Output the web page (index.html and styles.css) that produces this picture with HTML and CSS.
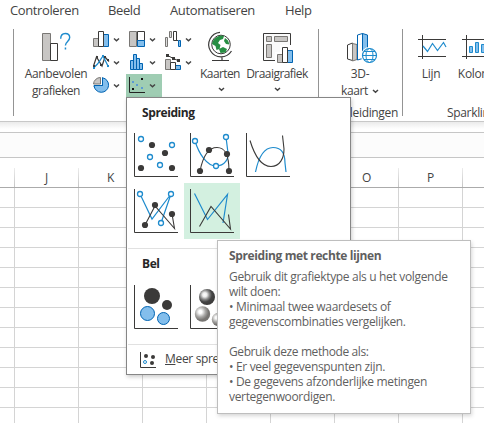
FILE: index.html
```html
<!DOCTYPE html>
<html lang="nl">
<head>
<meta charset="utf-8">
<title>Grafiek invoegen</title>
<link rel="stylesheet" href="styles.css">
</head>
<body>
<div class="app">
  <nav class="tabs">
    <span class="tab t1">Controleren</span><span class="tab t2">Beeld</span><span class="tab t3">Automatiseren</span><span class="tab t4">Help</span>
  </nav>
  <section class="ribbon">
    <div class="group group-start"></div>
    <div class="group group-charts">
      <div class="big recommended">
        <svg width="34" height="34" viewBox="40 30 34 34" fill="none"><path d="M42.5 33.5h8v27h-8z" fill="#c8c6c4" stroke="#797774"/><path d="M50.500 43.500h7v17h-7z" fill="#fff" stroke="#3b3a39"/><path d="M60.700 38.800C60.700 35.400 62.600 33.500 65.300 33.500 68 33.500 69.700 35.100 69.700 37.600 69.700 41.300 65.400 41.600 65.400 45.500" stroke="#1e8bcd" stroke-width="1.400"/><path d="M64.700 47.500h1.500v2h-1.500z" fill="#1e8bcd"/></svg>
        <span class="w-aan">Aanbevolen</span><span class="w-graf">grafieken</span>
      </div>
      <div class="gallery">
        <svg width="36" height="23" viewBox="90 28 36 23" fill="none"><path d="M93.500 38.500h5v8h-5z" fill="#c8c6c4" stroke="#797774"/><path d="M103.500 34.500h5v12h-5z" fill="#83beec" stroke="#0063b1"/><path d="M98.500 31.500h5v15h-5z" fill="#fff" stroke="#3b3a39"/><path class="chev" d="m114 38.500 2.500 2.200 2.500-2.200"/></svg>
        <svg width="36" height="23" viewBox="126 28 36 23" fill="none"><path d="M137.500 31.500h7v9h-7z" fill="#fff" stroke="#3b3a39"/><path d="M129.500 31.500h7v15h-7z" fill="#c8c6c4" stroke="#797774"/><path d="M137.500 40.500h7v6h-7z" fill="#83beec" stroke="#0063b1"/><path class="chev" d="m150 38.500 2.500 2.200 2.500-2.200"/></svg>
        <svg width="36" height="23" viewBox="162 28 36 23" fill="none"><path d="M165.500 37.500h2v9h-2zM169.500 31.500h2v6h-2z" fill="#ddd" stroke="#797774"/><path d="M173.500 31.500h3v9h-3z" fill="#fff" stroke="#3b3a39"/><path d="M178.500 40.500h2v6h-2z" fill="#83beec" stroke="#0063b1"/><path d="M176 40.500h2" stroke="#3b3a39"/><path class="chev" d="m186 38.500 2.500 2.200 2.500-2.200"/></svg>
        <svg width="36" height="23" viewBox="90 51 36 23" fill="none"><path d="m93.500 66 3-9 5.500 9 3-9 4 4.500" stroke="#3b3a39" stroke-width="1.200"/><path d="m93.500 68 4-4 5.500-8 5.500 11" stroke="#1e8bcd" stroke-width="1.300"/><path d="M93 65h2v2h-2zM96 56h2v2h-2zM100 64h2v2h-2zM104 56h2v2h-2zM107 59h2v2h-2z" fill="#3b3a39"/><path d="M93 67h2v2h-2zM102 55h2v2h-2zM107 65h2v2h-2z" fill="#1e8bcd"/><path class="chev" d="m114 61.500 2.500 2.200 2.500-2.200"/></svg>
        <svg width="36" height="23" viewBox="126 51 36 23" fill="none"><path d="M130.500 60.500h3v9h-3zM133.500 54.500h3v15h-3zM136.500 58.500h3v11h-3zM139.500 63.500h3v6h-3z" fill="#83beec" stroke="#0063b1"/><path class="chev" d="m150 61.500 2.500 2.200 2.500-2.200"/></svg>
        <svg width="36" height="23" viewBox="162 51 36 23" fill="none"><path d="M165.500 59.500h5v10h-5z" fill="#c8c6c4" stroke="#797774"/><path d="M175.500 65.500h5v4h-5z" fill="#83beec" stroke="#0063b1"/><path d="M170.500 62.500h5v7h-5z" fill="#fff" stroke="#3b3a39"/><path d="m167.500 55.500 6 3 5.500 2.500" stroke="#3b3a39"/><path d="M166 54h3v3h-3zM172 57h3v3h-3zM177 59h3v3h-3z" fill="#3b3a39"/><path class="chev" d="m186 61.500 2.500 2.200 2.500-2.200"/></svg>
        <svg width="36" height="23" viewBox="90 74 36 23" fill="none"><path d="M102.500 77.800v7.700h-8.500A7.300 7.300 0 1 0 102.500 77.800z" fill="#83beec" stroke="#0063b1"/><path d="M92.500 86V76h9.500v10z" fill="#fff"/><path d="M94 86.500v-1h8.500v-8" stroke="#0063b1"/><path d="M93.500 84h7v-6.500a7 7 0 0 0-7 6.500z" fill="#c8c6c4" stroke="#797774"/><path class="chev" d="m114 84.500 2.500 2.200 2.500-2.200"/></svg>
        <svg class="selected" width="36" height="23" viewBox="126 74 36 23" fill="none"><path d="M129.500 77v15.500H145" stroke="#222"/><path d="M141 78h2v2h-2zM132 88h2v2h-2z" fill="#111"/><path d="M132 81h2v2h-2zM136 84h2v2h-2zM141 87h2v2h-2z" fill="#5b9bd5"/><path class="chev" d="m150 84.500 2.500 2.200 2.500-2.200"/></svg>
      </div>
      <div class="big maps">
        <svg width="34" height="34" viewBox="204 30 34 34" fill="none"><circle cx="221" cy="44.500" r="9.300" fill="#fff" stroke="#3b3a39"/><path d="M216 37.500q4-3 8-1.500l-1 3-3 1-2 3 2.500 2-1 4-3 1-1-4-3.500-2q.5-4 4-6.500zM225 38l3 2.500 1.500 4-3.500-.5-2-3zM219 49l4-2 4 2-1.500 3.500-5 .5z" fill="#278e43"/><path d="M220 32.300A12.300 12.300 0 1 0 231.500 51M222 57.500v3M212 60.500h17" stroke="#3b3a39" stroke-width="1.200"/></svg>
        <span class="w-kaarten">Kaarten</span><svg width="7" height="5" viewBox="0 0 7 5"><path class="chev" d="m1 1 2.500 2.200L6 1"/></svg>
      </div>
      <div class="big pivot">
        <svg width="34" height="34" viewBox="260 30 34 34" fill="none"><path d="M290.500 45V33.500h-27v27H275" fill="#fafafa" stroke="#3b3a39"/><path d="M266.500 36.500h5v5h-5zM274.500 36.500h13v5h-13zM266.500 44.500h5v13h-5z" fill="#c8c6c4" stroke="#797774"/><path d="M275 52h5v-7h13v18h-18z" fill="#fff"/><path d="M277.500 54.500h5v8h-5z" fill="#c8c6c4" stroke="#797774"/><path d="M287.500 50.500h5v12h-5z" fill="#83beec" stroke="#0063b1"/><path d="M282.500 47.500h5v15h-5z" fill="#fff" stroke="#3b3a39"/></svg>
        <span class="w-draai">Draaigrafiek</span><svg width="7" height="5" viewBox="0 0 7 5"><path class="chev" d="m1 1 2.500 2.200L6 1"/></svg>
      </div>
    </div>
    <div class="group group-tours">
      <div class="big map3d">
        <svg width="34" height="34" viewBox="344 30 34 34" fill="none"><path d="m347.500 45 5-2v17.500l-5-1.500z" fill="#fff" stroke="#3b3a39"/><path d="m352.500 43.500 4.500 1v15l-4.500 1.500z" fill="#c8c6c4" stroke="#797774"/><path d="m357.500 35 5-1.500v25l-5 1.500z" fill="#fff" stroke="#0063b1"/><path d="m362.500 33.500 5 1.500v23l-5 1z" fill="#83beec" stroke="#0063b1"/><circle cx="369.500" cy="55.500" r="8.500" fill="#fff"/><circle cx="369.500" cy="55.500" r="7" fill="#fff" stroke="#1e8bcd" stroke-width="1.200"/><path d="M362.500 55.500h14M364 51.500h11M364 59.500h11" stroke="#1e8bcd"/><ellipse cx="369.500" cy="55.500" rx="3.500" ry="7" stroke="#1e8bcd"/></svg>
        <span class="w-3d">3D-</span><span class="w-kaart">kaart <svg width="7" height="5" viewBox="0 0 7 5"><path class="chev" d="m1 1 2.500 2.200L6 1"/></svg></span>
      </div>
      <div class="caption"><span class="w-rond">Rondleidingen</span></div>
    </div>
    <div class="group group-spark">
      <div class="big line">
        <svg width="34" height="34" viewBox="414 30 34 34" fill="none"><path d="M418 39.500h28M418 56.500h28M422.500 35v24" stroke="#3b3a39"/><path d="m423 46 4.500 5.500 5-8 5 7 6-8 2.500 4.500" stroke="#1e8bcd" stroke-width="1.200"/></svg>
        <span class="w-lijn">Lijn</span>
      </div>
      <div class="big column">
        <svg width="34" height="34" viewBox="456 30 34 34" fill="none"><path d="M460 39.500h28M460 56.500h28M464.500 35v24" stroke="#3b3a39"/><path d="M467.500 46.500h3v6h-3zM473.500 42.500h3v10h-3zM479.500 44.500h3v8h-3z" fill="#83beec" stroke="#1e8bcd"/></svg>
        <span class="w-kolom">Kolom</span>
      </div>
      <div class="caption"><span class="w-spark">Sparklines</span></div>
    </div>
  </section>
  <div class="strip"></div>
  <div class="formula"></div>
  <div class="headers"><i></i><b>J</b><b>K</b><b></b><b></b><b></b><b>O</b><b>P</b><b></b></div>
  <div class="cells"></div>

  <div class="menu">
    <h2><span class="w-spreiding">Spreiding</span></h2>
    <div class="tiles">
      <svg width="56" height="56" viewBox="128 127 56 56" fill="none"><path class="axis" d="M134.500 133v43.500H178"/><g class="ring"><circle cx="141" cy="139" r="2.500"/><circle cx="172" cy="145" r="2.500"/><circle cx="150" cy="157" r="2.500"/><circle cx="160" cy="165" r="2.500"/></g><g class="dot"><circle cx="152" cy="145" r="3.100"/><circle cx="165" cy="153" r="3.100"/><circle cx="141" cy="168" r="3.100"/><circle cx="172" cy="168" r="3.100"/></g></svg>
      <svg width="56" height="56" viewBox="184 127 56 56" fill="none"><path class="axis" d="M190.500 133v43.500H234"/><path class="blue" d="M195 141C199 154 207 166 216 166S229 158 228 153L226 137"/><path class="dark" d="M200 171C203 156 209 147.500 217 147.500S229 154 229 171"/><g class="ring"><circle cx="195" cy="141" r="2.500"/><circle cx="226" cy="137" r="2.500"/><circle cx="216" cy="166" r="2.500"/></g><g class="dot"><circle cx="209" cy="150" r="3.100"/><circle cx="227" cy="154" r="3.100"/><circle cx="200" cy="171" r="3.100"/><circle cx="229" cy="171" r="3.100"/></g></svg>
      <svg width="56" height="56" viewBox="240 127 56 56" fill="none"><path class="axis" d="M246.500 133v43.500H290"/><path class="blue" d="M255.500 172C259 155 265 147.500 273 147.500 282 147.500 285 154 285 163L286 172"/><path class="dark" d="M250 140.500C255 157 262 166.500 271 166.500S284 158 284 149L282.500 135.500"/></svg>
      <svg width="56" height="56" viewBox="128 183 56 56" fill="none"><path class="axis" d="M134.500 189v43.500H178"/><path class="blue" d="m140 194 12 25 19-25-10 29"/><path class="dark" d="m145 225 10-19 19.500 22.500L172 214"/><g class="ring"><circle cx="140" cy="194" r="2.500"/><circle cx="171" cy="194" r="2.500"/><circle cx="161" cy="223" r="2.500"/></g><g class="dot"><circle cx="155" cy="205" r="3.100"/><circle cx="145" cy="225" r="3.100"/><circle cx="172" cy="214" r="3.100"/></g></svg>
      <svg class="hover" width="56" height="56" viewBox="184 183 56 56" fill="none"><path class="axis" d="M190.500 189v43.500H234"/><path class="blue" d="m194.500 193.500 13 26 20-25-4.500 28.500"/><path class="dark" d="m199.500 226.500 11.500-20 19.500 22.500-2-14.500"/></svg>
    </div>
    <h2 class="second"><span class="w-bel">Bel</span></h2>
    <div class="tiles bubbles">
      <svg width="56" height="56" viewBox="128 278 56 56" fill="none"><path class="axis" d="M134.500 284v43.500H178"/><g class="dot"><circle cx="152" cy="295" r="8"/><circle cx="167" cy="304" r="5"/></g><g fill="#83beec" stroke="#0063b1"><circle cx="147.500" cy="312.500" r="7"/><circle cx="163.500" cy="317.500" r="6"/></g></svg>
      <svg width="56" height="56" viewBox="184 278 56 56" fill="none"><defs><radialGradient id="dk" cx=".36" cy=".36" r=".66"><stop offset="0" stop-color="#fff"/><stop offset=".2" stop-color="#eee"/><stop offset=".45" stop-color="#888"/><stop offset=".68" stop-color="#444"/><stop offset="1" stop-color="#3b3a39"/></radialGradient><radialGradient id="lt" cx=".36" cy=".36" r=".66"><stop offset=".15" stop-color="#fff"/><stop offset=".5" stop-color="#aaa9a7"/><stop offset=".8" stop-color="#777572"/></radialGradient></defs><path class="axis" d="M190.500 284v43.500H234"/><circle cx="207" cy="296" r="8" fill="url(#dk)"/><circle cx="202.500" cy="313" r="7.700" fill="url(#lt)"/><circle cx="218.500" cy="318.500" r="6.700" fill="url(#lt)"/></svg>
    </div>
    <div class="more">
      <svg width="18" height="18" viewBox="139 349 18 18" fill="none"><path class="axis" d="M140.500 350v15.500H156"/><g class="dot"><circle cx="146" cy="354" r="2"/><circle cx="153" cy="355" r="2"/><circle cx="152" cy="361" r="2"/></g><circle cx="145" cy="360" r="1.500" stroke="#1e8bcd"/></svg>
      <span class="w-meer"><u>M</u>eer spre</span>
    </div>
  </div>

  <div class="tooltip">
    <h3><span class="w-tip">Spreiding met rechte lijnen</span></h3>
    <p><span class="l1">Gebruik dit grafiektype als u het volgende</span><br><span class="l2">wilt doen:</span><br><span class="l3">• Minimaal twee waardesets of</span><br><span class="l4">gegevenscombinaties vergelijken.</span></p>
    <p><span class="l5">Gebruik deze methode als:</span><br><span class="l6">• Er veel gegevenspunten zijn.</span><br><span class="l7">• De gegevens afzonderlijke metingen</span><br><span class="l8">vertegenwoordigen.</span></p>
  </div>
</div>
</body>
</html>
```
FILE: styles.css
```css
* { box-sizing: border-box; }
body { margin: 0; background: #fff; }
svg { display: block; flex: none; }
.app {
  position: relative;
  width: 484px;
  height: 423px;
  overflow: hidden;
  font: 12px/16px "Open Sans", "Noto Sans", sans-serif;
  letter-spacing: -0.33px;
  color: #444;
  white-space: nowrap;
}
.chev { fill: none; stroke: #444; stroke-width: 1.5; }

.tabs { display: flex; height: 29px; padding: 2px 0 0 10px; font-size: 13px; line-height: 17px; }
.t1 { width: 98px; }
.t2 { width: 62px; }
.t3 { width: 115px; }
.tab { letter-spacing: -0.38px; }

.ribbon { display: flex; height: 93px; border-bottom: 1px solid #c8c8c8; }
.group { position: relative; display: flex; flex: none; height: 87px; border-right: 1px solid #949494; }
.group-start { width: 14px; }
.group-charts { width: 305px; }
.group-tours { width: 84px; }
.group-spark { width: 120px; border: 0; }
.big { display: flex; flex-direction: column; align-items: center; flex: none; padding-top: 1px; }
.big > span { height: 16px; }
.big > svg:first-child { margin-bottom: 2px; }
.big > span + svg { margin-top: 5px; }
.big > span + span { margin-top: 1px; }
.recommended { width: 76px; padding-left: 8px; }
.recommended svg { margin-left: 2px; }
.w-graf { letter-spacing: -0.5px; }
.maps { width: 46px; }
.w-kaarten { letter-spacing: -0.6px; margin-right: 2px; }
.pivot { width: 66px; }
.w-draai { letter-spacing: -0.55px; }
.map3d { width: 82px; }
.map3d > svg { margin-left: 2px; }
.line { width: 56px; }
.column { width: 32px; }
.w-kaart { display: flex; align-items: center; gap: 4px; letter-spacing: -0.4px; }
.gallery { display: grid; grid-template-columns: repeat(3, 36px); grid-template-rows: repeat(3, 23px); margin-top: -1px; height: 69px; }
.selected { background: #9fcdb3; }
.caption { position: absolute; bottom: -5px; }
.group-tours .caption { right: 4px; }
.group-spark .caption { left: 44px; }

.strip { height: 10px; background: linear-gradient(#ebebeb, #fff 7px); }
.formula { height: 26px; border: solid #c6c6c6; border-width: 1px 0; background: #fcfcfc; }
.headers { display: flex; height: 30px; padding-top: 10px; border-bottom: 1px solid #ababab; }
.headers i { width: 15px; flex: none; }
.headers b { width: 64px; flex: none; font-weight: 400; text-align: center; line-height: 19px; }
.headers i, .headers b { border-style: solid; border-width: 0 1px 0 0; border-image: linear-gradient(#eee, #c4c4c4) 1; }
.cells {
  height: 235px;
  background:
    repeating-linear-gradient(transparent 0 19px, #d4d4d4 19px 20px),
    repeating-linear-gradient(90deg, transparent 0 14px, #d4d4d4 14px 15px, transparent 15px 64px);
}

.menu {
  position: absolute;
  left: 126px;
  top: 97px;
  width: 225px;
  height: 278px;
  padding: 0 1px;
  border: 1px solid #868686;
  background: #fff;
  box-shadow: 1px 2px 4px rgba(0, 0, 0, .2);
}
.menu h2 { height: 29px; margin: 0; padding: 7px 0 0 14px; font-size: 12px; line-height: 16px; color: #262626; letter-spacing: -0.4px; }
.tiles { display: flex; flex-wrap: wrap; width: 168px; }
.menu h2.second { height: 31px; margin-top: 9px; padding-top: 7px; border-top: 1px solid #e1e1e1; }
.bubbles { height: 65px; }
.hover { background: #d3f0e0; }
.more { display: flex; gap: 8px; padding: 6px 0 0 11px; border-top: 1px solid #e1e1e1; }
.axis { stroke: #3b3a39; }
.blue { stroke: #1e8bcd; stroke-width: 1.2; }
.dark { stroke: #3b3a39; stroke-width: 1.1; }
.ring { fill: #fff; stroke: #1e8bcd; stroke-width: 1.3; }
.dot { fill: #3b3a39; }

.tooltip {
  position: absolute;
  left: 217px;
  top: 240px;
  width: 254px;
  height: 174px;
  padding: 7px 11px;
  border: 1px solid #bebebe;
  background: #fff;
  color: #5f5f5f;
  box-shadow: 1px 2px 4px rgba(0, 0, 0, .16);
}
.tooltip h3 { margin: 0 0 5px; font-size: 12px; line-height: 16px; letter-spacing: -0.38px; }
.tooltip p { margin: 0 0 15px; line-height: 15px; }
.l5 { letter-spacing: -0.4px; }
```
